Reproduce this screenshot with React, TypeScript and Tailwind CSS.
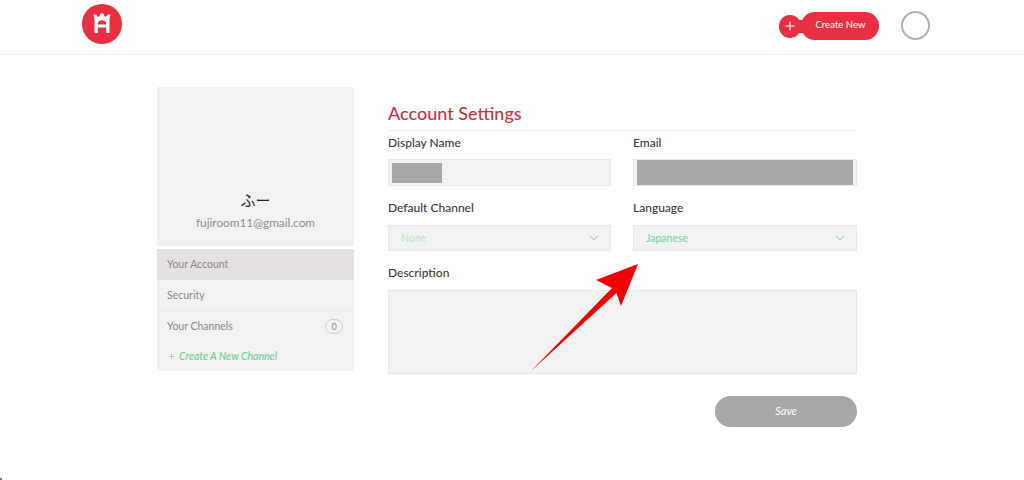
import { ChevronDown, Plus } from "lucide-react";

function Logo() {
  return (
    <svg width="40" height="40" viewBox="0 0 40 40">
      <circle cx="20" cy="20" r="20" fill="#e92f41" />
      <path
        fillRule="evenodd"
        fill="#fff"
        d="M12.500 29V15.500L11.500 10.500h2.800l.8 2h2.300L18.500 9.500h3l1 3h2.300l.8-2h2.900L27.500 15.500V29h-3.300v-5.500h-8.400V29ZM15.800 20.500h8.400V20c0-2.200-1.800-3.800-4.200-3.800s-4.200 1.600-4.200 3.800Z"
      />
    </svg>
  );
}

function Label({ children }: { children: React.ReactNode }) {
  return <p className="text-[12px] leading-[16px] font-medium text-[#3a3a3a]">{children}</p>;
}

function Select({ value, faint }: { value: string; faint?: boolean }) {
  return (
    <div className="mt-[9px] flex h-[26px] items-center justify-between border border-[#e8e8e8] bg-[#f2f2f2] pl-[12px] pr-[9px]">
      <span className={faint ? "pt-[1px] text-[10.500px] text-[#b5e6c8]" : "pt-[1px] text-[10.500px] text-[#6fd49a]"}>{value}</span>
      <ChevronDown size={14} strokeWidth={1.6} className="text-[#5fcf90]" />
    </div>
  );
}

export default function App() {
  return (
    <div className="relative h-[480px] w-[1024px] overflow-hidden bg-white font-['Lato',sans-serif]">
      <header className="flex h-[55px] items-start border-b border-[#f3f3f3]">
        <div className="ml-[82px] mt-[4px]">
          <Logo />
        </div>
        <div className="ml-auto mr-[94px] mt-[11px] flex items-center">
          <div className="relative mt-[1px] flex h-[23px] w-[22px] items-center justify-center rounded-full bg-[#e92f41]">
            <div className="absolute -right-[4px] top-[5px] h-[13px] w-[8px] bg-[#e92f41]" />
            <Plus size={14} strokeWidth={2} className="relative text-white" />
          </div>
          <button className="flex h-[28px] w-[78px] items-center justify-center rounded-full bg-[#e92f41] pl-[1px] text-[9.600px] text-white">
            Create New
          </button>
          <div className="ml-[22px] h-[29px] w-[29px] rounded-full border-2 border-[#b0b0b0]" />
        </div>
      </header>

      <div className="flex pl-[157px] pt-[32px]">
        <aside className="w-[197px]">
          <div className="flex h-[159px] flex-col items-center justify-end bg-[#f2f2f2] pb-[14px]">
            <p className="font-['Lato','Noto_Sans_CJK_JP',sans-serif] text-[15px] leading-[20px] text-[#222]">ふー</p>
            <p className="mt-[4px] text-[11.800px] leading-[18px] text-[#8f8f8f]">fujiroom11@gmail.com</p>
          </div>
          <nav className="mt-[3px] bg-[#f2f2f2] text-[10.500px] text-[#888]">
            <div className="flex h-[31px] items-center bg-[#e5e1e0] pl-[10px]">Your Account</div>
            <div className="flex h-[31px] items-center border-b border-[#ececec] pl-[10px] pt-[1px]">Security</div>
            <div className="flex h-[30px] items-center justify-between px-[11px] pl-[10px] pt-[1px]">
              <span>Your Channels</span>
              <span className="flex h-[15px] w-[18px] items-center justify-center rounded-full border border-[#cfcfcf] text-[9px]">0</span>
            </div>
            <div className="flex h-[30px] items-center gap-[3px] pl-[10px] pt-[1px] italic text-[#5fcf90]">
              <Plus size={9} strokeWidth={1.5} />
              <span>Create A New Channel</span>
            </div>
          </nav>
        </aside>

        <main className="ml-[34px] w-[469px]">
          <h1 className="mt-[15px] h-[29px] border-b border-[#f0f0f0] text-[18px] leading-[23px] font-medium text-[#cb3344]">Account Settings</h1>
          <div className="mt-[4px] grid grid-cols-[223px_224px] gap-x-[22px]">
            <div>
              <Label>Display Name</Label>
              <div className="mt-[8px] flex h-[27px] items-center border border-[#e8e8e8] bg-[#f2f2f2] pl-[3px]">
                <div className="h-[20px] w-[50px] bg-[#a8a8a8]" />
              </div>
            </div>
            <div>
              <Label>Email</Label>
              <div className="mt-[8px] flex h-[27px] items-center border border-[#e8e8e8] bg-[#f2f2f2] pl-[3px] pr-[3px]">
                <div className="h-[25px] w-full bg-[#a8a8a8]" />
              </div>
            </div>
            <div className="mt-[14px]">
              <Label>Default Channel</Label>
              <Select value="None" faint />
            </div>
            <div className="mt-[14px]">
              <Label>Language</Label>
              <Select value="Japanese" />
            </div>
          </div>
          <div className="mt-[14px]">
            <Label>Description</Label>
            <div className="mt-[9px] h-[84px] border border-[#e8e8e8] bg-[#f2f2f2]" />
          </div>
          <div className="mt-[22px] flex justify-end">
            <button className="h-[31px] w-[142px] rounded-full bg-[#a8a8a8] text-[11px] italic text-white">Save</button>
          </div>
        </main>
      </div>

      {/* annotation arrow */}
      <svg className="absolute left-[525px] top-[260px]" width="120" height="116" viewBox="525 260 120 116">
        <path fill="#f40000" d="M638 264 621 306 616.500 293 531 371 612 288 596 280Z" />
      </svg>
      <div className="absolute bottom-0 left-0 h-[2px] w-[2px] bg-[#777]" />
    </div>
  );
}
